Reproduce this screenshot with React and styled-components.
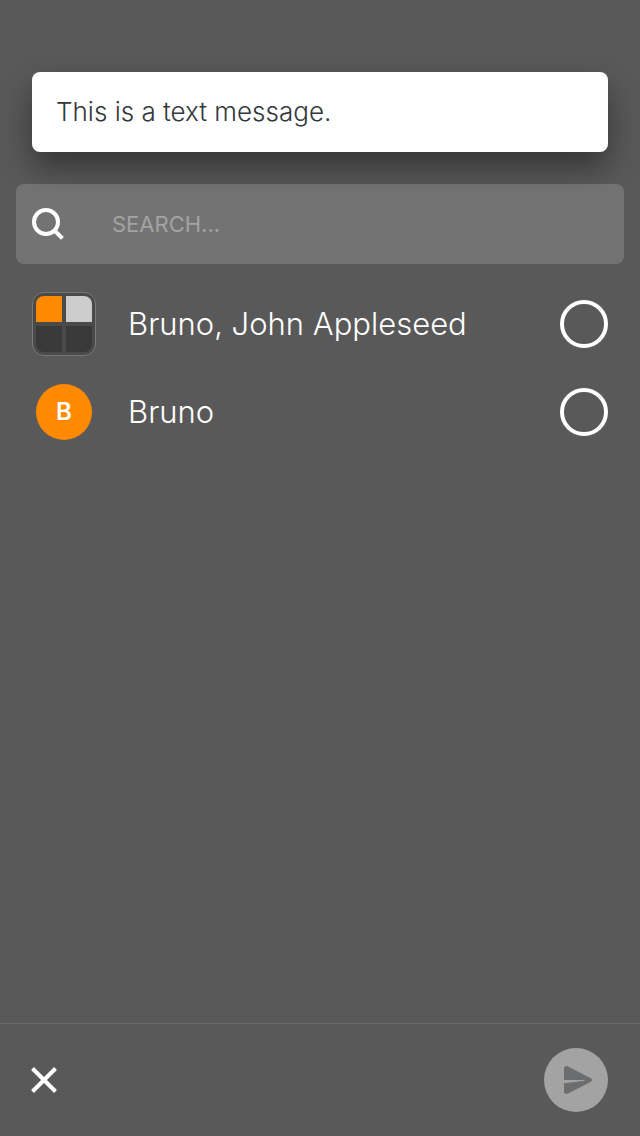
import React, { useState } from "react";
import styled, { createGlobalStyle } from "styled-components";

const GlobalStyle = createGlobalStyle`
  *, *::before, *::after { box-sizing: border-box; }
  body {
    margin: 0;
    background: #595959;
    color: #fff;
    font-family: Inter, "Liberation Sans", sans-serif;
  }
`;

const Screen = styled.div`
  display: flex;
  flex-direction: column;
  min-height: 100vh;
  padding-top: 72px;
`;

const MessageCard = styled.p`
  margin: 0 32px 32px;
  padding: 20px 24px;
  border-radius: 8px;
  background: #fff;
  color: #33373a;
  font-size: 26px;
  font-weight: 300;
  line-height: 40px;
  box-shadow: 0 16px 32px rgba(0, 0, 0, 0.4);
`;

const SearchBar = styled.label`
  position: relative;
  display: flex;
  align-items: center;
  gap: 48px;
  height: 80px;
  margin: 0 16px 16px;
  padding: 0 16px;
  border-radius: 8px;
  background: rgba(255, 255, 255, 0.16);
`;

const SearchInput = styled.input`
  flex: 1;
  min-width: 0;
  padding: 0;
  border: 0;
  outline: 0;
  background: transparent;
  color: #fff;
  font: inherit;
  font-size: 22px;
  font-weight: 400;
  line-height: 32px;

  &::placeholder {
    color: #a3a3a3;
    opacity: 1;
    text-transform: uppercase;
  }
`;

const List = styled.ul`
  flex: 1;
  margin: 0;
  padding: 0;
  list-style: none;
`;

const Row = styled.label`
  display: flex;
  align-items: center;
  height: 88px;
  padding: 0 32px;
  cursor: pointer;
`;

const AvatarSlot = styled.span`
  display: grid;
  place-items: center;
  flex: none;
  width: 64px;
  height: 64px;
  margin-right: 32px;
`;

const GroupAvatar = styled.span`
  display: grid;
  grid-template-columns: 26px 26px;
  grid-template-rows: 26px 26px;
  gap: 4px;
  width: 64px;
  height: 64px;
  padding: 3px;
  border: 1px solid #787878;
  border-radius: 12px;
  background: #4a4a4a;
`;

const Tile = styled.span`
  background: ${({ $color }) => $color};
  border-radius: ${({ $radius }) => $radius};
`;

const Avatar = styled.span`
  display: grid;
  place-items: center;
  width: 56px;
  height: 56px;
  border-radius: 50%;
  background: #ff8900;
  font-size: 24px;
  font-weight: 600;
  line-height: 34px;
`;

const Name = styled.span`
  flex: 1;
  font-size: 31px;
  font-weight: 300;
  line-height: 40px;
`;

const Check = styled.input`
  appearance: none;
  flex: none;
  width: 48px;
  height: 48px;
  margin: 0;
  border: 4px solid #fff;
  border-radius: 50%;

  &:checked {
    background: #fff;
  }
`;

const Footer = styled.footer`
  display: flex;
  align-items: center;
  justify-content: space-between;
  height: 113px;
  padding: 0 32px 0 28px;
  border-top: 1px solid #6a6a6a;
`;

const IconButton = styled.button`
  display: grid;
  place-items: center;
  width: 32px;
  height: 32px;
  padding: 0;
  border: 0;
  background: transparent;
  color: #fff;
  cursor: pointer;
`;

const SendButton = styled(IconButton)`
  width: 64px;
  height: 64px;
  border-radius: 50%;
  background: #a3a3a3;
  color: #6b6d6e;
`;

const groupTiles = [
  ["#ff8900", "8px 0 0 0"],
  ["#cccccc", "0 8px 0 0"],
  ["#393939", "0 0 0 8px"],
  ["#393939", "0 0 8px 0"],
];

const conversations = [
  { id: "group", name: "Bruno, John Appleseed", group: true },
  { id: "bruno", name: "Bruno", group: false },
];

function SearchIcon() {
  return (
    <svg width="32" height="32" viewBox="0 0 32 32" fill="none" stroke="currentColor" strokeWidth="4" aria-hidden="true">
      <circle cx="14" cy="14" r="12" />
      <path d="M22 22l8.400 8.400" />
    </svg>
  );
}

function CloseIcon() {
  return (
    <svg width="32" height="32" viewBox="0 0 32 32" fill="none" stroke="currentColor" strokeWidth="4" aria-hidden="true">
      <path d="M4.500 4.500l23 23M27.500 4.500l-23 23" />
    </svg>
  );
}

function SendIcon() {
  return (
    <svg width="64" height="64" viewBox="0 0 64 64" fill="currentColor" aria-hidden="true">
      <path d="M20 32V20.500C20 18.400 22 17.400 24 18.400L46.500 30C48.500 31 48.500 33 46.500 34L24 45.600C22 46.600 20 45.600 20 43.500V35.200L40.500 32.700V32Z" />
    </svg>
  );
}

export default function App() {
  const [selected, setSelected] = useState({});
  const [query, setQuery] = useState("");

  return (
    <>
      <GlobalStyle />
      <Screen>
        <MessageCard>This is a text message.</MessageCard>
        <SearchBar>
          <SearchIcon />
          <SearchInput
            type="text"
            aria-label="Search"
            placeholder="Search..."
            value={query}
            onChange={(e) => setQuery(e.target.value)}
          />
        </SearchBar>
        <List>
          {conversations.map(({ id, name, group }) => (
            <li key={id}>
              <Row>
                <AvatarSlot aria-hidden="true">
                  {group ? (
                    <GroupAvatar>
                      {groupTiles.map(([color, radius]) => (
                        <Tile key={radius} $color={color} $radius={radius} />
                      ))}
                    </GroupAvatar>
                  ) : (
                    <Avatar>{name[0]}</Avatar>
                  )}
                </AvatarSlot>
                <Name>{name}</Name>
                <Check
                  type="checkbox"
                  checked={Boolean(selected[id])}
                  onChange={(e) => setSelected({ ...selected, [id]: e.target.checked })}
                />
              </Row>
            </li>
          ))}
        </List>
        <Footer>
          <IconButton type="button" aria-label="Close">
            <CloseIcon />
          </IconButton>
          <SendButton type="button" aria-label="Send">
            <SendIcon />
          </SendButton>
        </Footer>
      </Screen>
    </>
  );
}
